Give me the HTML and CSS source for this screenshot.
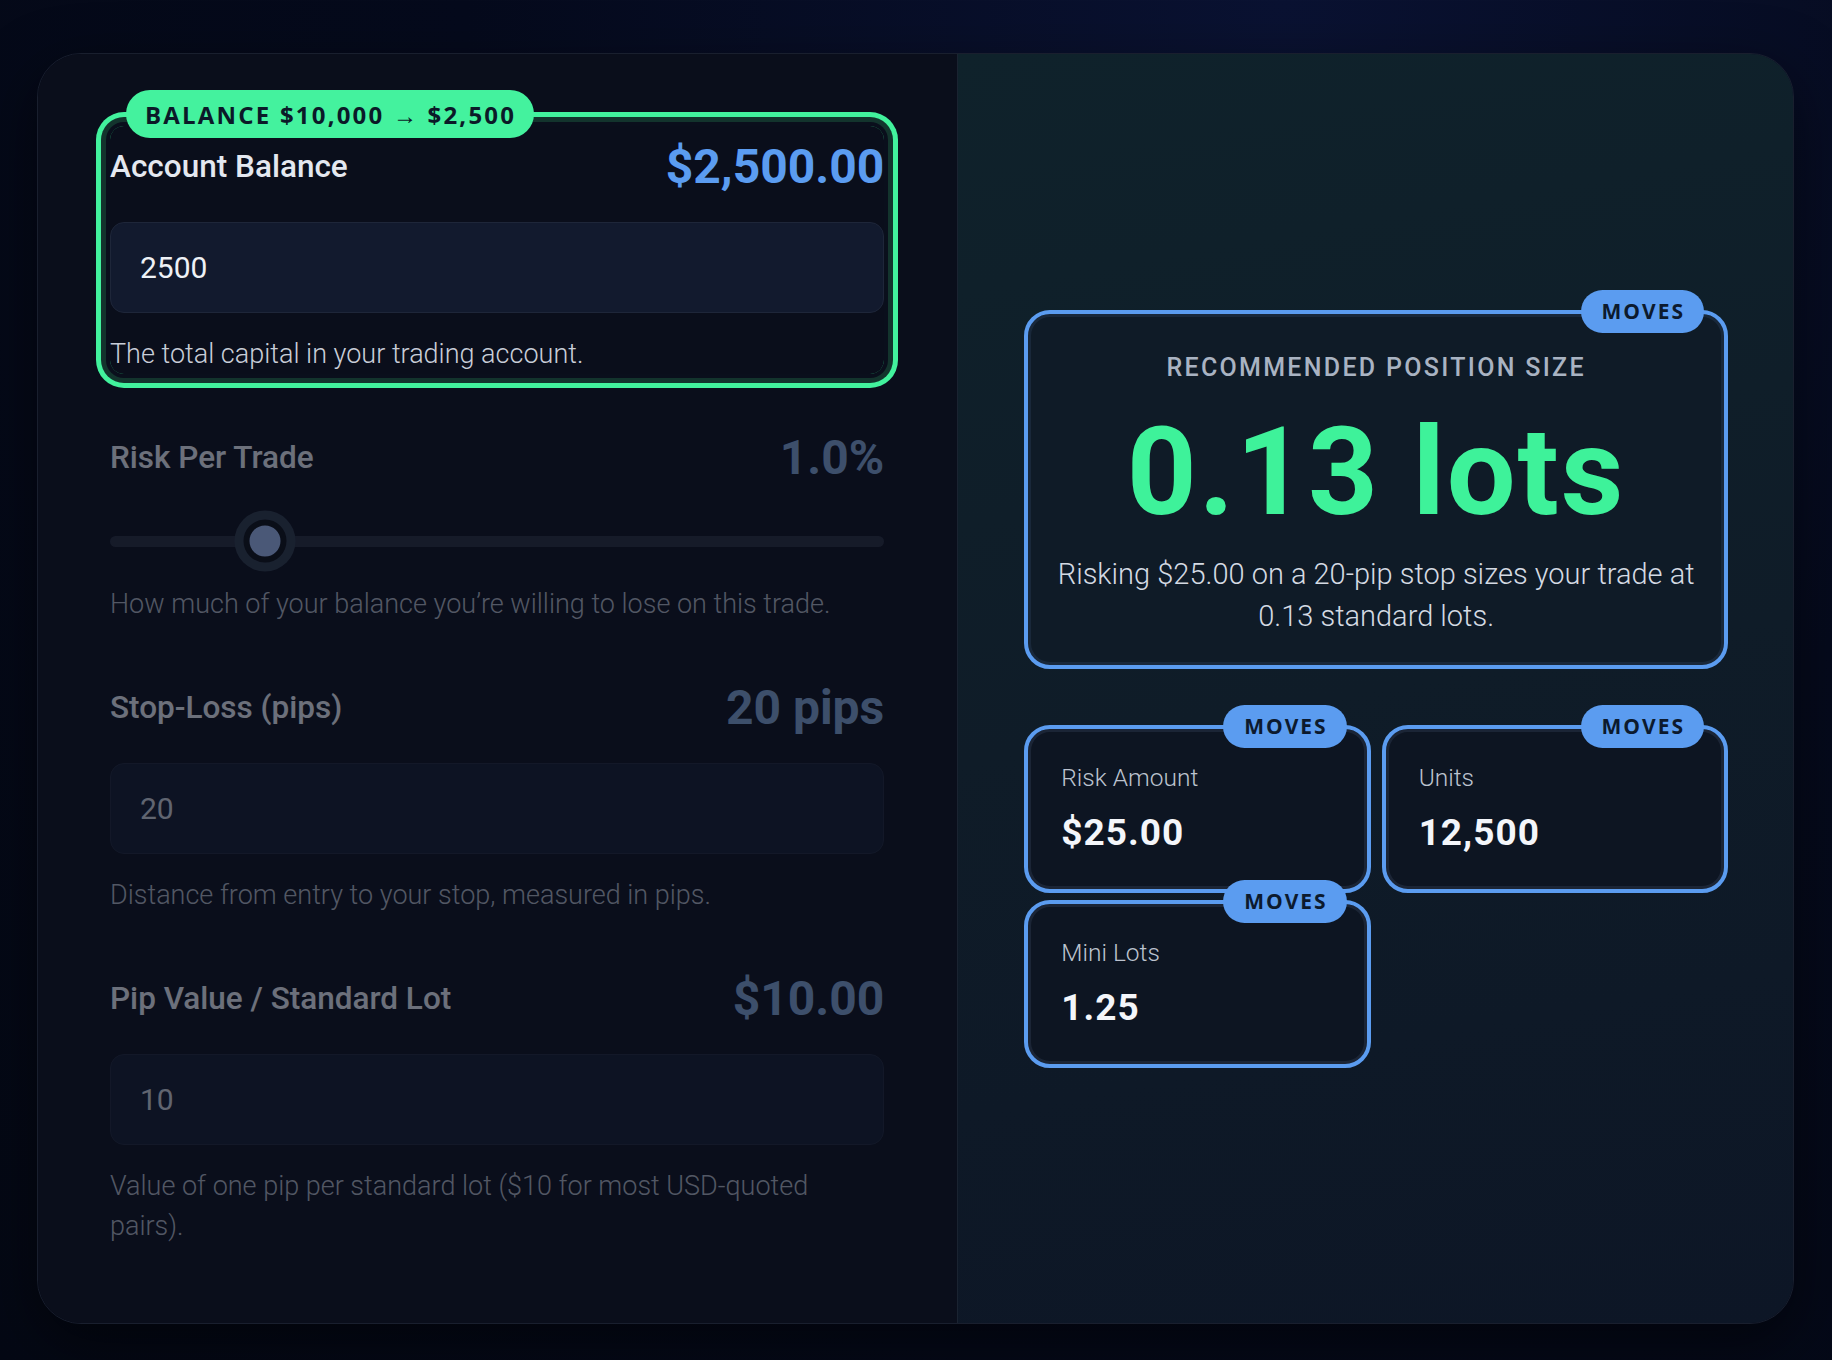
FILE: index.html
```html
<!DOCTYPE html>
<html lang="en">
<head>
    <meta charset="UTF-8">
    <meta name="viewport" content="width=device-width, initial-scale=1.0">
    <title>Position Size Calculator</title>
    <link rel="stylesheet" href="styles.css">
</head>
<body>
    <main class="calc">
        <!-- inputs -->
        <section class="inputs">
            <div class="field field--active">
                <span class="field-badge">BALANCE $10,000 → $2,500</span>
                <div class="field-head">
                    <label class="field-label" for="balance">Account Balance</label>
                    <span class="field-value">$2,500.00</span>
                </div>
                <input class="field-input" id="balance" type="text" value="2500">
                <p class="field-help">The total capital in your trading account.</p>
            </div>

            <div class="field field--dim">
                <div class="field-head">
                    <span class="field-label">Risk Per Trade</span>
                    <span class="field-value">1.0%</span>
                </div>
                <div class="slider">
                    <div class="slider-track"></div>
                    <div class="slider-thumb" style="left: 20%"></div>
                </div>
                <p class="field-help">How much of your balance you’re willing to lose on this trade.</p>
            </div>

            <div class="field field--dim">
                <div class="field-head">
                    <label class="field-label" for="stop">Stop-Loss (pips)</label>
                    <span class="field-value">20 pips</span>
                </div>
                <input class="field-input" id="stop" type="text" value="20">
                <p class="field-help">Distance from entry to your stop, measured in pips.</p>
            </div>

            <div class="field field--dim">
                <div class="field-head">
                    <label class="field-label" for="pip">Pip Value / Standard Lot</label>
                    <span class="field-value">$10.00</span>
                </div>
                <input class="field-input" id="pip" type="text" value="10">
                <p class="field-help">Value of one pip per standard lot ($10 for most USD-quoted pairs).</p>
            </div>
        </section>

        <!-- results -->
        <section class="results">
            <div class="results-inner">
                <div class="result-card">
                    <span class="moves">MOVES</span>
                    <div class="result-title">RECOMMENDED POSITION SIZE</div>
                    <div class="result-number">0.13 lots</div>
                    <p class="result-desc">Risking $25.00 on a 20-pip stop sizes your trade at 0.13 standard lots.</p>
                </div>

                <div class="stats">
                    <div class="stat">
                        <span class="moves">MOVES</span>
                        <div class="stat-label">Risk Amount</div>
                        <div class="stat-value">$25.00</div>
                    </div>
                    <div class="stat">
                        <span class="moves">MOVES</span>
                        <div class="stat-label">Units</div>
                        <div class="stat-value">12,500</div>
                    </div>
                    <div class="stat">
                        <span class="moves">MOVES</span>
                        <div class="stat-label">Mini Lots</div>
                        <div class="stat-value">1.25</div>
                    </div>
                </div>
            </div>
        </section>
    </main>
</body>
</html>
```

FILE: styles.css
```css
* {
    margin: 0;
    padding: 0;
    box-sizing: border-box;
}

body {
    font-family: Roboto, "Noto Sans", sans-serif;
    background: radial-gradient(ellipse at 70% 0%, #0a1232 0%, #050a1c 45%, #040814 100%);
    min-height: 100vh;
    padding: 53px 38px 38px 37px;
    color: #e4e8f0;
}

/* main card */
.calc {
    display: grid;
    grid-template-columns: 1.1fr 1fr;
    border: 1px solid #191f2e;
    border-radius: 44px;
    overflow: hidden;
    box-shadow: 0 20px 60px rgba(0, 0, 0, 0.5);
}

/* left column */
.inputs {
    background: #0a0e1b;
    padding: 72px 73px 77px 72px;
    display: flex;
    flex-direction: column;
    gap: 43px;
}

.field {
    position: relative;
    padding-top: 11px;
}

.field--active {
    border-radius: 14px;
    box-shadow: 0 0 0 4px #0a0f1c, 0 0 0 9px #13342d, 0 0 0 14px #42f29d;
}

.field--dim {
    opacity: 0.45;
}

.field-badge {
    position: absolute;
    top: -36px;
    left: 16px;
    height: 48px;
    display: flex;
    align-items: center;
    padding: 0 18px 0 19px;
    border-radius: 24px;
    background: #44f29e;
    color: #0b1a28;
    font-family: "Open Sans", sans-serif;
    font-weight: 700;
    font-size: 24px;
    letter-spacing: 2.2px;
    white-space: nowrap;
    z-index: 2;
}

.field-head {
    display: flex;
    align-items: center;
    justify-content: space-between;
    height: 58px;
}

.field-label {
    font-size: 31.5px;
    font-weight: 500;
    color: #e4e8f0;
}

.field-value {
    font-size: 48px;
    font-weight: 700;
    color: #5b9cf0;
}

.field--dim .field-value {
    color: #7b9ecc;
}

.field-input {
    display: block;
    width: 100%;
    height: 91px;
    margin-top: 27px;
    padding: 0 29px;
    background: #121a2e;
    border: 1px solid #1e2639;
    border-radius: 14px;
    color: #eef1f6;
    font-family: Roboto, sans-serif;
    font-size: 30px;
    font-weight: 400;
    outline: none;
}

.field--dim .field-input {
    color: #c9ced8;
}

.field-help {
    max-width: 740px;
    margin-top: 21px;
    font-size: 27px;
    font-weight: 300;
    line-height: 40px;
    color: #c8cdd8;
}

.field--dim .field-help {
    color: #a9b0bd;
}

/* slider */
.slider {
    position: relative;
    height: 44px;
    margin-top: 33px;
    display: flex;
    align-items: center;
}

.slider-track {
    width: 100%;
    height: 11px;
    border-radius: 6px;
    background: #252b3c;
}

.slider-thumb {
    position: absolute;
    top: 50%;
    width: 43px;
    height: 43px;
    transform: translate(-50%, -50%);
    border-radius: 50%;
    background: #98b2e7;
    border: 6px solid #0a0e16;
    box-shadow: 0 0 0 9px #2d3849;
}

/* right column */
.results {
    background: linear-gradient(170deg, #0f222b 0%, #0f1c28 50%, #0d1626 100%);
    border-left: 1px solid #1a2331;
    padding: 0 65px 0 66px;
    display: flex;
    align-items: center;
}

.results-inner {
    width: 100%;
}

.moves {
    position: absolute;
    top: -24px;
    right: 20px;
    height: 43px;
    display: flex;
    align-items: center;
    padding: 0 19px 0 21px;
    border-radius: 22px;
    background: #5b9cf0;
    color: #0c1a2e;
    font-family: "Open Sans", sans-serif;
    font-weight: 700;
    font-size: 21px;
    letter-spacing: 2px;
    z-index: 2;
}

.result-card {
    position: relative;
    border: 4px solid #5b9cf0;
    border-radius: 26px;
    background: #0f1b27;
    box-shadow: inset 0 0 0 3px #19283a;
    padding: 39px 20px 28px;
    text-align: center;
}

.result-title {
    font-size: 25px;
    font-weight: 500;
    line-height: 29px;
    letter-spacing: 2.3px;
    color: #a9b3c2;
}

.result-number {
    margin-top: 30px;
    font-size: 122px;
    font-weight: 700;
    line-height: 1;
    letter-spacing: 2px;
    color: #3ef29a;
}

.result-desc {
    margin-top: 19px;
    font-size: 29px;
    font-weight: 300;
    line-height: 42px;
    color: #d4dae3;
}

.stats {
    margin-top: 56px;
    display: grid;
    grid-template-columns: 1fr 1fr;
    column-gap: 11px;
    row-gap: 7px;
}

.stat {
    position: relative;
    height: 168px;
    border: 4px solid #5b9cf0;
    border-radius: 26px;
    background: #0d1522;
    box-shadow: inset 0 0 0 3px #1b2536;
    padding: 34px 33px 0;
}

.stat-label {
    font-size: 24.5px;
    font-weight: 300;
    line-height: 29px;
    color: #bcc3cf;
}

.stat-value {
    margin-top: 20px;
    font-size: 37px;
    font-weight: 700;
    line-height: 42px;
    letter-spacing: 1px;
    color: #f4f6fa;
}
```
